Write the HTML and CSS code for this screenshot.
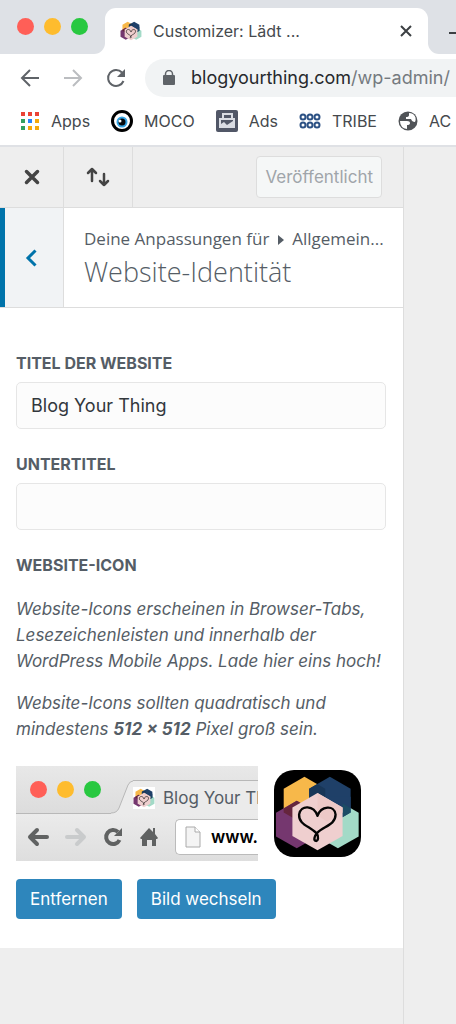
FILE: index.html
```html
<!DOCTYPE html>
<html lang="de">
<head>
<meta charset="utf-8">
<meta name="viewport" content="width=device-width, initial-scale=1">
<title>Customizer: Lädt ...</title>
<link rel="stylesheet" href="styles.css">
</head>
<body>
<svg class="defs" aria-hidden="true">
  <symbol id="hexagons" viewBox="0 0 260 260">
    <path fill="#f7b84a" d="M91 20l62 36v71l-62 36-62-36V56z"/>
    <path fill="#1f4068" d="M167 20l62 36v71l-62 36-62-36V56z"/>
    <path fill="#183657" d="M105 56l24-14 24 14v71h-48z"/>
    <path fill="#75376f" d="M68 92l62 36v71l-62 35-62-35v-71z"/>
    <path fill="#65253d" d="M29 115l39-23 62 36v13l-39 22-62-36z"/>
    <path fill="#a3dac7" d="M191 92l62 36v71l-62 35-62-35v-71z"/>
    <path fill="#1f4068" d="M153 80h76v47l-38 22-38-22z"/>
    <path fill="#1b4c65" d="M205 100l24 14v13l-24 14z"/>
    <path fill="#efcfcf" d="M130 69l75 43v85l-75 43-75-43v-85z"/>
    <path fill="#edc9c7" d="M130 69l75 43v15l-47 27-28-18z"/>
    <path fill="none" stroke="#050505" stroke-width="7" stroke-linecap="round" stroke-linejoin="round" d="M130 137C119 105 80 103 75 133c-2 30 32 35 51 55 9 10 6 25-1 24-8-2-4-15 5-25 19-19 54-23 54-54-3-30-44-26-54 4z"/>
  </symbol>
</svg>

<header class="browser">
  <div class="tabstrip">
    <div class="lights"><i class="red"></i><i class="amber"></i><i class="green"></i></div>
    <div class="tab">
      <svg class="favicon"><use href="#hexagons"/></svg>
      <span class="tab-title">Customizer: Lädt ...</span>
      <button class="plain" aria-label="Tab schließen"><svg width="14" height="14" viewBox="0 0 14 14"><path d="M2 2l10 10M12 2L2 12" stroke="#3c4043" stroke-width="2"/></svg></button>
    </div>
    <div class="after-tab"><button class="plain" aria-label="Neuer Tab"><svg width="16" height="16" viewBox="0 0 16 16"><path d="M0 8h16M8 0v16" stroke="#3c4043" stroke-width="2"/></svg></button></div>
  </div>
  <div class="toolbar">
    <div class="nav-buttons">
      <button class="plain" aria-label="Zurück"><svg width="20" height="20" viewBox="0 0 20 20"><path d="M19 10H2M10 2l-8 8 8 8" fill="none" stroke="#5f6368" stroke-width="2"/></svg></button>
      <button class="plain" aria-label="Vorwärts"><svg width="20" height="20" viewBox="0 0 20 20"><path d="M1 10h17M10 2l8 8-8 8" fill="none" stroke="#bbbdc0" stroke-width="2"/></svg></button>
      <button class="plain" aria-label="Neu laden"><svg width="20" height="20" viewBox="0 0 20 20"><path d="M17.500 13A8 8 0 1 1 16 4.500" fill="none" stroke="#5f6368" stroke-width="2"/><path d="M19 1v8h-8z" fill="#5f6368"/></svg></button>
    </div>
    <div class="address">
      <svg width="12" height="16" viewBox="0 0 12 16"><path d="M2.500 7V4a3.500 3.500 0 0 1 7 0v3" fill="none" stroke="#5f6368" stroke-width="1.500"/><rect y="5" width="12" height="10" rx="1" fill="#5f6368"/></svg>
      <span class="url">blogyourthing.com<span>/wp-admin/</span></span>
    </div>
  </div>
  <nav class="bookmarks" aria-label="Lesezeichen">
    <a href="#"><svg width="20" height="20" viewBox="0 0 20 20"><path fill="#ea4335" d="M1 1h4v4H1zM8 1h4v4H8zM15 1h4v4h-4z"/><path fill="#34a060" d="M1 8h4v4H1zM1 15h4v4H1z"/><path fill="#2684fc" d="M8 8h4v4H8z"/><path fill="#f5a80b" d="M15 8h4v4h-4zM8 15h4v4H8zM15 15h4v4h-4z"/></svg>Apps</a>
    <a href="#"><svg width="22" height="22" viewBox="0 0 22 22"><circle cx="11" cy="11" r="9.500" fill="#fff" stroke="#000" stroke-width="3"/><circle cx="11" cy="12" r="5.500" fill="#35a5e5"/><circle cx="11" cy="12" r="3.500" fill="#05090d"/><circle cx="9" cy="11" r="1.500" fill="#fff"/></svg>MOCO</a>
    <a href="#"><svg width="22" height="22" viewBox="0 0 22 22"><rect width="22" height="22" rx="2" fill="#515767"/><path d="M7 8V4h9v4" fill="none" stroke="#d9dce3" stroke-width="2"/><path d="M3 8h16v10H3zM5 10v6h12v-6z" fill="#d9dce3" fill-rule="evenodd"/><path d="M5 17v-3l3-2 3 3 6-4v6z" fill="#d9dce3"/></svg>Ads</a>
    <a href="#"><svg width="22" height="16" viewBox="0 0 22 16"><g fill="#fff" stroke="#2c5184" stroke-width="2"><circle cx="4" cy="4" r="2.500"/><circle cx="11" cy="4" r="2.500"/><circle cx="18" cy="4" r="2.500"/><circle cx="4" cy="12" r="2.500"/><circle cx="11" cy="12" r="2.500"/><circle cx="18" cy="12" r="2.500"/></g></svg>TRIBE</a>
    <a href="#"><svg width="20" height="20" viewBox="0 0 20 20"><circle cx="10" cy="10" r="9.500" fill="#505357"/><path d="M2 10h7q3 0 3 2t-3 2v4Q2 17 2 10zM11 2v2q0 2-3 2v2h5q1 3 4 3 2-5-2-8-2-1-4-1z" fill="#fff"/></svg>AC</a>
  </nav>
</header>

<div class="workspace">
  <main class="panel">
    <div class="actions">
      <button class="cell close" aria-label="Schließen"><svg width="16" height="16" viewBox="0 0 16 16"><path d="M2.500 2.500l11 11M13.500 2.500l-11 11" stroke="#444" stroke-width="3.500" stroke-linecap="round"/></svg></button>
      <button class="cell sort" aria-label="Themes wechseln"><svg width="24" height="20" viewBox="0 0 24 20"><path d="M6 14V3M2 6l4-4 4 4M18 7v11M14 14l4 4 4-4" fill="none" stroke="#444" stroke-width="2.500" stroke-linecap="round" stroke-linejoin="round"/></svg></button>
      <button class="publish" disabled>Veröffentlicht</button>
    </div>
    <div class="section-head">
      <button class="cell back" aria-label="Zurück"><svg width="12" height="18" viewBox="0 0 12 18"><path d="M10.500 1.500L3 9l7.500 7.500" fill="none" stroke="#0073aa" stroke-width="3"/></svg></button>
      <div class="heading">
        <p class="crumbs">Deine Anpassungen für <svg width="6" height="10" viewBox="0 0 6 10"><path d="M0 0l6 5-6 5z" fill="#555d66"/></svg> Allgemein...</p>
        <h1>Website-Identität</h1>
      </div>
    </div>
    <form class="controls">
      <label for="site-title">Titel der Website</label>
      <input id="site-title" type="text" value="Blog Your Thing">
      <label for="tagline">Untertitel</label>
      <input id="tagline" type="text">
      <h2>Website-Icon</h2>
      <p>Website-Icons erscheinen in Browser-Tabs, Lesezeichenleisten und innerhalb der WordPress Mobile Apps. Lade hier eins hoch!</p>
      <p>Website-Icons sollten quadratisch und mindestens <strong>512 × 512</strong> Pixel groß sein.</p>
      <div class="previews">
        <div class="mini">
          <div class="mini-tabs">
            <div class="lights"><i class="red"></i><i class="amber"></i><i class="green"></i></div>
            <svg class="slope" width="22" height="34" viewBox="0 0 22 34"><path d="M0 33q6 0 8-5L17 5q2-4 5-4v33H0z" fill="#ebebeb"/><path d="M0 33q6 0 8-5L17 5q2-4 5-4" fill="none" stroke="#b8b8b8"/></svg>
            <div class="mini-tab"><svg class="mini-favicon"><use href="#hexagons"/></svg><span>Blog Your Thing</span></div>
          </div>
          <div class="mini-bar">
            <svg width="22" height="20" viewBox="0 0 22 20"><path d="M20 10H3M10 3l-7 7 7 7" fill="none" stroke="#606262" stroke-width="4" stroke-linecap="round" stroke-linejoin="round"/></svg>
            <svg width="22" height="20" viewBox="0 0 22 20"><path d="M2 10h17M12 3l7 7-7 7" fill="none" stroke="#c9cbcc" stroke-width="4" stroke-linecap="round" stroke-linejoin="round"/></svg>
            <svg width="20" height="20" viewBox="0 0 20 20"><path d="M16.500 13A7 7 0 1 1 15 5" fill="none" stroke="#606262" stroke-width="4"/><path d="M19 1v8h-8z" fill="#606262"/></svg>
            <svg width="20" height="20" viewBox="0 0 20 20"><path d="M10 1l4 4V1h2v6l3 4-1 1h-1v7h-4v-6H8v6H3v-7H2l-1-1z" fill="#606262"/></svg>
            <div class="mini-url"><svg width="16" height="22" viewBox="0 0 16 22"><path d="M1 1h9l5 5v15H1z" fill="#f4f4f4" stroke="#aaa"/><path d="M10 1v5h5" fill="#fff" stroke="#aaa"/></svg>www.</div>
          </div>
        </div>
        <div class="app-icon"><svg><use href="#hexagons"/></svg></div>
      </div>
      <div class="buttons"><button type="button">Entfernen</button><button type="button">Bild wechseln</button></div>
    </form>
  </main>
</div>
</body>
</html>
```
FILE: styles.css
```css
* { box-sizing: border-box; }
body { margin: 0; min-height: 100vh; display: flex; flex-direction: column; overflow-x: hidden; background: #fff; color: #555d66; font: 17px/24px Inter, "Noto Sans", sans-serif; }
button, input { font: inherit; margin: 0; }
h1, h2, p { margin: 0; }
svg { display: block; flex: none; }
.defs { position: absolute; width: 0; height: 0; }
.plain { padding: 0; border: 0; background: none; }

.browser { overflow: hidden; border-bottom: 2px solid #dfe1e5; }
.tabstrip { display: flex; height: 54px; padding-top: 8px; background: linear-gradient(#dee1e6 0 8px, #fff 8px); }
.lights { display: flex; align-items: center; gap: 10px; }
.lights i { width: 17px; height: 17px; border-radius: 50%; }
.red { background: #ff5f57; }
.amber { background: #febc2e; }
.green { background: #28c840; }
.tabstrip .lights { width: 105px; margin-top: -8px; padding: 0 17px 2px; background: #dee1e6; border-bottom-right-radius: 11px; }
.tab { flex: 1; display: flex; align-items: center; gap: 11px; padding: 0 15px; background: linear-gradient(to right, #dee1e6, #dee1e6) no-repeat 0 0 / 100% 12px; color: #45494d; font-size: 16px; position: relative; z-index: 0; }
.tab::before { content: ""; position: absolute; inset: 0; z-index: -1; background: #fff; border-radius: 11px 11px 0 0; }
.favicon { width: 22px; height: 22px; }
.tab-title { flex: 1; white-space: nowrap; }
.after-tab { width: 28px; padding: 15px 0 0 21px; background: #dee1e6; border-bottom-left-radius: 11px; overflow: hidden; }

.toolbar { display: flex; align-items: center; gap: 19px; height: 48px; padding-left: 20px; }
.nav-buttons { display: flex; gap: 23px; }
.address { flex: 1; display: flex; align-items: center; gap: 16px; height: 38px; min-width: 0; padding-left: 18px; border-radius: 19px 0 0 19px; background: #f1f3f4; overflow: hidden; }
.url { color: #27292c; font-size: 18px; white-space: nowrap; }
.url span { color: #757a7f; }
.bookmarks { display: flex; gap: 21px; height: 43px; padding: 0 0 6px 20px; white-space: nowrap; }
.bookmarks a { display: flex; align-items: center; gap: 11px; color: #45494d; font-size: 16px; text-decoration: none; }

.workspace { flex: 1; display: flex; padding-right: 52px; background: #eee; }
.panel { flex: 1; min-width: 0; border-right: 1px solid #ddd; }
.actions { display: flex; align-items: center; height: 61px; padding-right: 21px; border-bottom: 1px solid #ddd; }
.cell { display: flex; flex: none; align-items: center; justify-content: center; align-self: stretch; padding: 0; border: 0; border-right: 1px solid #ddd; background: none; }
.close, .back { width: 64px; }
.sort { width: 69px; }
.publish { height: 42px; margin-left: auto; padding: 0 8px; border: 1px solid #ddd; border-radius: 4px; background: #f5f7f7; color: #a0a5aa; }
.section-head { display: flex; background: #fff; border-bottom: 1px solid #ddd; }
.back { padding-right: 6px; border-left: 5px solid #0073aa; background: #f1f3f5; }
.heading { flex: 1; min-width: 0; padding: 19px 12px 15px 20px; font-family: "Open Sans", sans-serif; }
.crumbs { line-height: 24px; white-space: nowrap; }
.crumbs svg { display: inline-block; margin: 0 4px; }
h1 { font-size: 27px; line-height: 41px; font-weight: 300; }

.controls { padding: 45px 17px 29px 16px; background: #fff; }
.controls label, h2 { display: block; font-size: 16px; line-height: 20px; font-weight: 700; text-transform: uppercase; }
.controls input { display: block; width: 100%; height: 47px; margin: 9px 0 25px; padding: 0 14px; border: 1px solid #e6e6e6; border-radius: 5px; background: #fcfcfc; color: #32373c; font-size: 18px; }
h2 { margin-bottom: 21px; }
.controls p { margin-bottom: 16px; line-height: 26px; font-style: italic; }
.previews { display: flex; align-items: center; gap: 16px; margin: 24px 0 18px; }
.mini { width: 242px; height: 95px; overflow: hidden; background: linear-gradient(#e8e8e8, #dcdcdc 48px, #ebebeb 48px, #dedede); }
.mini-tabs { display: flex; align-items: flex-end; height: 48px; border-bottom: 1px solid #b8b8b8; }
.mini .lights { align-self: center; margin: 0 10px 0 14px; }
.slope { margin-bottom: -1px; }
.mini-tab { display: flex; flex: 1; align-items: center; gap: 8px; min-width: 0; height: 34px; margin-bottom: -1px; border-top: 1px solid #b8b8b8; background: #ebebeb; white-space: nowrap; }
.mini-favicon { width: 22px; height: 22px; background: #fff; }
.mini-bar { display: flex; align-items: center; gap: 16px; height: 46px; padding-left: 11px; }
.mini-url { display: flex; flex: 1 0 auto; align-items: center; gap: 10px; height: 36px; padding-left: 9px; border: 1px solid #bbb; border-right: 0; border-radius: 5px 0 0 5px; background: #fff; color: #000; font-weight: 600; }
.app-icon { width: 87px; height: 87px; border-radius: 20px; background: #000; overflow: hidden; }
.app-icon svg { width: 100%; height: 100%; }
.buttons { display: flex; gap: 15px; }
.buttons button { height: 40px; padding: 0 14px; border: 0; border-radius: 4px; background: #2e86bc; color: #fff; }
```
